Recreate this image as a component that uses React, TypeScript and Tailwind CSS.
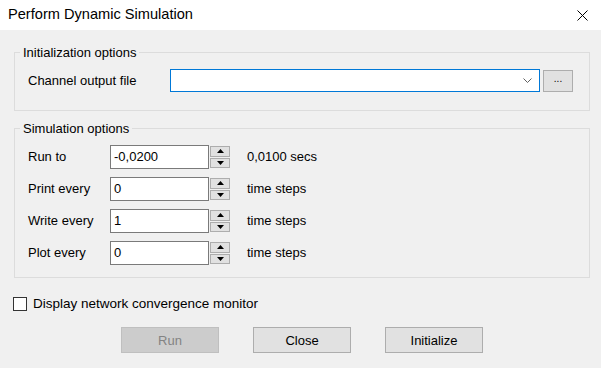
const Spin = ({ value }: { value: string }) => {
  return (
    <div className="flex h-[24px] items-stretch">
      <div className="w-[99px] border border-[#7a7a7a] bg-white pl-[3px] leading-[22px]">
        {value}
      </div>
      <div className="ml-[1px] flex w-[20px] flex-col gap-[1px] py-[1px]">
        <div className="flex flex-1 items-center justify-center border border-[#adadad] bg-[#e1e1e1]">
          <svg width="7" height="4" viewBox="0 0 7 4">
            <path d="M0 4 L3.5 0 L7 4 Z" fill="#000" />
          </svg>
        </div>
        <div className="flex flex-1 items-center justify-center border border-[#adadad] bg-[#e1e1e1]">
          <svg width="7" height="4" viewBox="0 0 7 4">
            <path d="M0 0 L3.5 4 L7 0 Z" fill="#000" />
          </svg>
        </div>
      </div>
    </div>
  );
};

const Row = ({ label, value, unit }: { label: string; value: string; unit: string }) => {
  return (
    <div className="flex h-[24px] items-center">
      <div className="w-[82px]">{label}</div>
      <Spin value={value} />
      <div className="ml-[17px]">{unit}</div>
    </div>
  );
};

const App = () => {
  return (
    <div className="h-[368px] w-[601px] overflow-hidden bg-[#f0f0f0] font-['Liberation_Sans',Arial,sans-serif] text-[13px] text-black">
      {/* title bar */}
      <div className="flex h-[30px] items-center justify-between bg-white pl-[8px] pr-[13px]">
        <div className="text-[14.6px]">Perform Dynamic Simulation</div>
        <svg width="11" height="11" viewBox="0 0 11 11">
          <path d="M0.5 0.5 L10.5 10.5 M10.5 0.5 L0.5 10.5" stroke="#000" strokeWidth="1" />
        </svg>
      </div>

      <div className="px-[13px] pt-[15px]">
        <fieldset className="ml-[1px] w-[576px] border border-[#dcdcdc] pb-[18px]">
          <legend className="ml-[5px] px-[3px] leading-[15px]">Initialization options</legend>
          <div className="mt-[9px] flex items-center pl-[13px]">
            <div className="w-[142px]">Channel output file</div>
            <div className="flex h-[23px] w-[370px] items-center justify-end border border-[#0078d7] bg-white pr-[7px]">
              <svg width="9" height="5" viewBox="0 0 9 5">
                <path d="M0.5 0.5 L4.5 4.5 L8.5 0.5" stroke="#606060" fill="none" strokeWidth="1" />
              </svg>
            </div>
            <div className="ml-[3px] flex h-[22px] w-[30px] items-start justify-center border border-[#adadad] bg-[#e1e1e1] text-[10px] leading-[16px]">
              ...
            </div>
          </div>
        </fieldset>

        <fieldset className="ml-[1px] mt-[10px] w-[576px] border border-[#dcdcdc] pb-[12px]">
          <legend className="ml-[5px] px-[3px] leading-[15px]">Simulation options</legend>
          <div className="mt-[9px] flex flex-col gap-[8px] pl-[13px]">
            <Row label="Run to" value="-0,0200" unit="0,0100 secs" />
            <Row label="Print every" value="0" unit="time steps" />
            <Row label="Write every" value="1" unit="time steps" />
            <Row label="Plot every" value="0" unit="time steps" />
          </div>
        </fieldset>

        <div className="mt-[16px] flex items-center text-[13.5px]">
          <div className="h-[14px] w-[14px] border border-[#333] bg-white" />
          <div className="ml-[6px]">Display network convergence monitor</div>
        </div>

        <div className="mt-[13px] flex gap-[34px] pl-[108px]">
          <div className="flex h-[26px] w-[98px] items-center justify-center border border-[#bfbfbf] bg-[#cccccc] text-[#838383]">
            Run
          </div>
          <div className="flex h-[26px] w-[98px] items-center justify-center border border-[#adadad] bg-[#e1e1e1]">
            Close
          </div>
          <div className="flex h-[26px] w-[98px] items-center justify-center border border-[#adadad] bg-[#e1e1e1]">
            Initialize
          </div>
        </div>
      </div>
    </div>
  );
};

export default App;
